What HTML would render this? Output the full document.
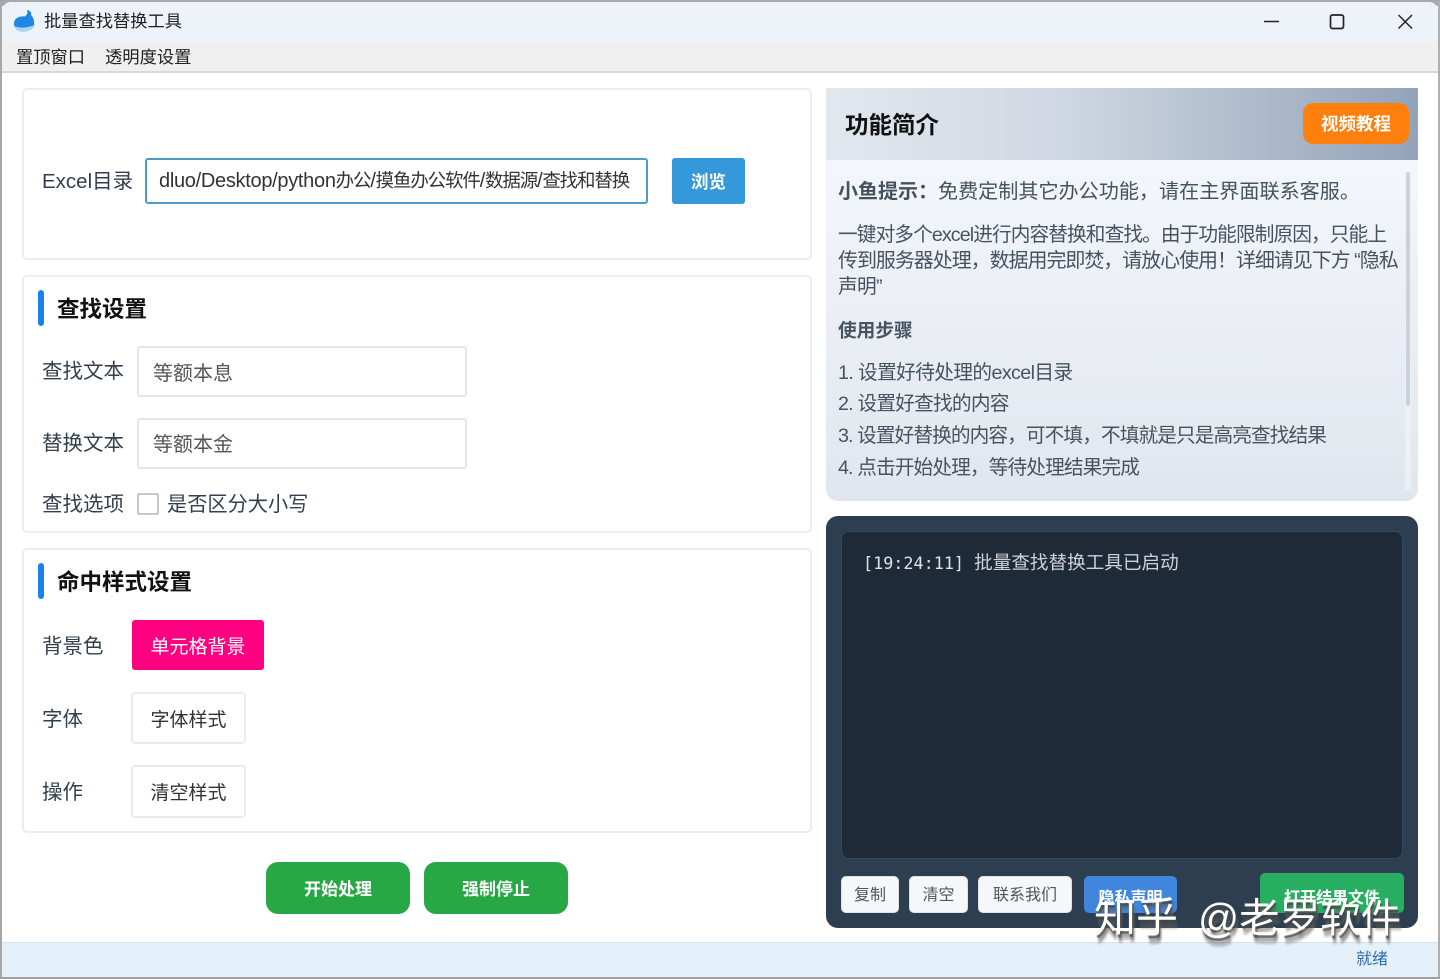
<!DOCTYPE html>
<html><head><meta charset="utf-8"><style>
*{box-sizing:border-box;margin:0;padding:0}
html,body{width:1440px;height:979px;overflow:hidden;background:#fff}
body{font-family:"Liberation Sans","Noto Sans CJK SC",sans-serif;color:#2c3e50;position:relative}
.a{position:absolute;white-space:nowrap}
.card{position:absolute;background:#fff;border:2px solid #ebedef;border-radius:5px}
.input{position:absolute;background:#fff;border:2px solid #e3e5e8;border-radius:3px;font-size:20px;color:#555;padding-left:14px;display:flex;align-items:center}
.t{font-size:20.5px;color:#333f4c;line-height:28px}
.h{font-size:22.5px;font-weight:700;color:#111;line-height:30px}
.bar{position:absolute;width:6px;height:36px;background:#1a82ea;border-radius:3px}
.btn{position:absolute;display:flex;align-items:center;justify-content:center;border-radius:4px}
.wb{background:#fff;border:2px solid #e9ebed;font-size:19px;color:#333}
.g{background:#28a745;color:#fff;font-weight:700;font-size:17px;border-radius:12px}
.r{font-size:19.7px;color:#46535f;line-height:26px}
.sb{background:#f5f7f9;color:#555;font-size:16px;border-radius:5px;border:1px solid #dde1e5;padding-bottom:3px}
.c{font-size:18.5px;letter-spacing:-1.15px}
.w{font-size:42px;line-height:60px;color:#fff;text-shadow:1px 3px 1px rgba(70,70,70,.8),2px 6px 2px rgba(90,90,90,.6),2px 9px 2px rgba(120,120,120,.4)}
</style></head><body>
<div class="a" style="left:0;top:0;width:1440px;height:6px;background:#a9a9a9"></div>
<div class="a" style="left:0;top:0;width:2px;height:979px;background:#a8a8a8"></div>
<div class="a" style="left:1438px;top:0;width:2px;height:979px;background:#b0b0b0"></div>
<div class="a" style="left:0;top:977px;width:1440px;height:2px;background:#9e9e9e"></div>
<div class="a" style="left:2px;top:2px;width:1436px;height:41px;background:#eef3f9;border-radius:9px 9px 0 0"></div>
<div class="a" style="left:2px;top:43px;width:1436px;height:30px;background:#f0f0f0;border-bottom:2px solid #d8d8d8"></div>

<svg class="a" style="left:13px;top:9px" width="22" height="24" viewBox="0 0 22 24">
<path d="M1 15C1 9 6 7 12 7.500C14 6 15 4 14 1C17 1.500 19 3.500 18 6C21 9 21.500 13 21 17C19 21 14 23 8 22.500C4 22 1 19 1 15Z" fill="#1e88e5"/>
<path d="M1 17C6 19 14 19.500 21 16C20 20 14 23.500 8 22.800C4 22 2 19.500 1 17Z" fill="#a9d6f5"/>
</svg>
<div class="a" style="left:44px;top:9px;font-size:17.25px;line-height:25px;color:#222">批量查找替换工具</div>
<div class="a" style="left:16px;top:45px;font-size:17.25px;line-height:25px;color:#222">置顶窗口</div>
<div class="a" style="left:105px;top:45px;font-size:17.3px;line-height:25px;color:#222">透明度设置</div>

<svg class="a" style="left:1260px;top:10px" width="160" height="24" viewBox="0 0 160 24" fill="none" stroke="#222" stroke-width="1.5">
<path d="M4 11.500H19"/>
<rect x="70.500" y="5" width="13" height="13.500" rx="2" stroke-width="1.700"/>
<path d="M138.500 5L152 18.500M152 5L138.500 18.500"/>
</svg>

<div class="card" style="left:22px;top:88px;width:790px;height:172px"></div>
<div class="a t" style="left:42px;top:168px">Excel目录</div>
<div class="a" style="left:145px;top:158px;width:503px;height:46px;background:#fff;border:2px solid #4a9cc9;border-radius:3px;overflow:hidden">
  <div class="a" style="left:12px;top:7px;font-size:20px;line-height:28px;color:#333;letter-spacing:-.3px">dluo/Desktop/python<span class="c">办公</span>/<span class="c">摸鱼办公软件</span>/<span class="c">数据源</span>/<span class="c">查找和替换</span></div>
</div>
<div class="btn" style="left:672px;top:158px;width:73px;height:46px;background:#3498db;color:#fff;font-weight:700;font-size:17.500px;border-radius:3px">浏览</div>

<div class="card" style="left:22px;top:275px;width:790px;height:258px"></div>
<div class="bar" style="left:38px;top:290px"></div>
<div class="a h" style="left:57px;top:295px">查找设置</div>
<div class="a t" style="left:42px;top:358px">查找文本</div>
<div class="input" style="left:137px;top:346px;width:330px;height:51px;padding-bottom:1px">等额本息</div>
<div class="a t" style="left:42px;top:430px">替换文本</div>
<div class="input" style="left:137px;top:418px;width:330px;height:51px;padding-bottom:2px">等额本金</div>
<div class="a t" style="left:42px;top:491px">查找选项</div>
<div class="a" style="left:137px;top:493px;width:22px;height:22px;border:2px solid #c9c9c9;border-radius:2px;background:#fff"></div>
<div class="a t" style="left:167px;top:491px;font-size:20.200px">是否区分大小写</div>

<div class="card" style="left:22px;top:548px;width:790px;height:285px"></div>
<div class="bar" style="left:38px;top:563px"></div>
<div class="a h" style="left:57px;top:568px">命中样式设置</div>
<div class="a t" style="left:42px;top:633px">背景色</div>
<div class="btn" style="left:132px;top:620px;width:132px;height:50px;background:#ff0080;color:#fff;font-size:19px;border-radius:3px">单元格背景</div>
<div class="a t" style="left:42px;top:706px">字体</div>
<div class="btn wb" style="left:131px;top:692px;width:115px;height:52px">字体样式</div>
<div class="a t" style="left:42px;top:779px">操作</div>
<div class="btn wb" style="left:131px;top:765px;width:115px;height:53px">清空样式</div>

<div class="btn g" style="left:266px;top:862px;width:144px;height:52px;padding-bottom:2px">开始处理</div>
<div class="btn g" style="left:424px;top:862px;width:144px;height:52px;padding-bottom:2px">强制停止</div>

<div class="a" style="left:826px;top:88px;width:592px;height:413px;background:linear-gradient(180deg,#f4f7fb 15%,#e1e6ee 100%);border-radius:0 0 12px 12px"></div>
<div class="a" style="left:826px;top:88px;width:592px;height:72px;background:linear-gradient(90deg,#e3e8ef 0%,#cfd7e2 40%,#93a3b9 100%)"></div>
<div class="a" style="left:845px;top:108px;font-size:23.500px;font-weight:700;line-height:34px;color:#111">功能简介</div>
<div class="btn" style="left:1303px;top:103px;width:106px;height:41px;background:#ff7f0e;color:#fff;font-weight:700;font-size:17.500px;border-radius:10px">视频教程</div>

<div class="a r" style="left:838px;top:179px;font-size:20px"><b>小鱼提示：</b><span style="font-size:20.100px">免费定制其它办公功能，请在主界面联系客服。</span></div>
<div class="a r" style="left:838px;top:222px;letter-spacing:-.92px">一键对多个excel进行内容替换和查找。由于功能限制原因，只能上</div>
<div class="a r" style="left:838px;top:248px;font-size:20px;letter-spacing:-1.050px">传到服务器处理，数据用完即焚，请放心使用！详细请见下方 “隐私</div>
<div class="a r" style="left:838px;top:274px;letter-spacing:-.7px">声明”</div>
<div class="a r" style="left:838px;top:318px;font-weight:700;font-size:18.700px">使用步骤</div>
<div class="a r" style="left:838px;top:360px;letter-spacing:-.62px">1. 设置好待处理的excel目录</div>
<div class="a r" style="left:838px;top:391px;letter-spacing:-.8px">2. 设置好查找的内容</div>
<div class="a r" style="left:838px;top:423px;letter-spacing:-.93px">3. 设置好替换的内容，可不填，不填就是只是高亮查找结果</div>
<div class="a r" style="left:838px;top:455px;letter-spacing:-.9px">4. 点击开始处理，等待处理结果完成</div>
<div class="a" style="left:1405px;top:172px;width:6px;height:318px;background:#eef0f3;border-radius:3px"></div>
<div class="a" style="left:1406px;top:172px;width:4px;height:234px;background:#ccd2d9;border-radius:2px"></div>

<div class="a" style="left:826px;top:516px;width:592px;height:412px;background:#2c3e50;border-radius:12px"></div>
<div class="a" style="left:841px;top:531px;width:562px;height:328px;background:#1e2a38;border:1px solid #34495e;border-radius:8px"></div>
<div class="a" style="left:863px;top:550px;font-size:16.800px;line-height:26px;color:#dde2e7;font-family:'DejaVu Sans Mono','Noto Sans CJK SC',monospace">[19:24:11] <span style="font-size:18.600px;color:#ccd2d8;font-family:'Liberation Sans','Noto Sans CJK SC',sans-serif">批量查找替换工具已启动</span></div>

<div class="btn sb" style="left:841px;top:876px;width:58px;height:37px">复制</div>
<div class="btn sb" style="left:909px;top:876px;width:59px;height:37px">清空</div>
<div class="btn sb" style="left:978px;top:876px;width:94px;height:37px">联系我们</div>
<div class="btn" style="left:1084px;top:876px;width:93px;height:37px;background:#3f86dc;color:#fff;font-weight:700;font-size:16px;border-radius:5px;padding-top:2px">隐私声明</div>
<div class="btn" style="left:1260px;top:873px;width:144px;height:40px;background:#27ae60;color:#fff;font-weight:700;font-size:16px;border-radius:5px;padding-top:5px">打开结果文件</div>

<div class="a" style="left:2px;top:942px;width:1436px;height:35px;background:#e4f1fb;border-top:1px solid #d5e3ee"></div>
<div class="a" style="left:1356px;top:948px;font-size:16px;line-height:24px;color:#2e6bb0">就绪</div>

<div class="a w" style="left:1094px;top:888px">知乎</div>
<div class="a w" style="left:1198px;top:888px;font-size:40.500px">@老罗软件</div>
</body></html>
